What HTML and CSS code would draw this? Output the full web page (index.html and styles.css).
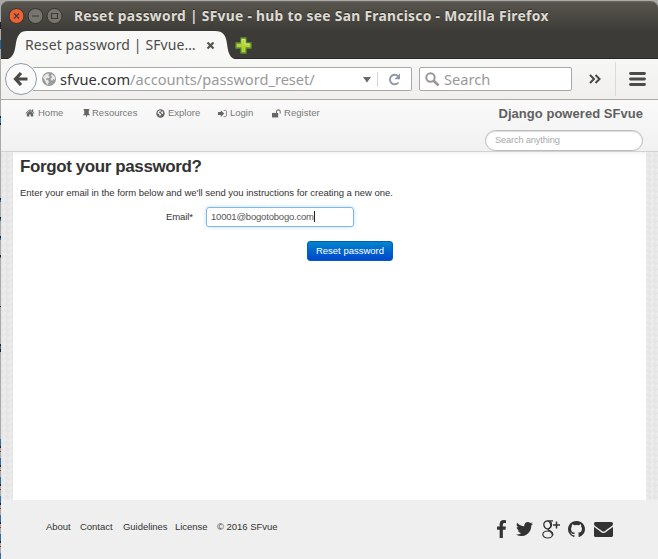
FILE: index.html
```html
<!DOCTYPE html>
<html lang="en">
<head>
<meta charset="utf-8">
<title>Reset password | SFvue - hub to see San Francisco</title>
<link rel="stylesheet" href="styles.css">
</head>
<body>
<div class="window">
  <div class="chrome">
    <div class="titlebar">
      <svg class="controls" width="55" height="18" viewBox="0 0 55 18">
        <g stroke="#34332f"><circle cx="8.500" cy="8" r="7.500" fill="#ee6035"/><circle cx="27.500" cy="8" r="7.500" fill="#77756e"/><circle cx="46.500" cy="8" r="7.500" fill="#77756e"/></g>
        <g fill="none" stroke="#3d3b36" stroke-width="1.200"><path d="M6 5.500l5 5M11 5.500l-5 5M24 8h7"/><path d="M43.500 5.500h6v5h-6z"/></g>
      </svg>
      <span class="window-title">Reset password | SFvue - hub to see San Francisco - Mozilla Firefox</span>
    </div>
    <div class="tabs">
      <div class="tab">
        <svg class="tab-shape" width="238" height="29" viewBox="0 0 238 29"><path d="M0 29C10 29 13 25 14.500 15C16 4 19 0 26 0H214C222 0 225 4 226 13C227.500 25 230 28 238 29Z" fill="#f8f8f7"/></svg>
        <span class="tab-label">Reset password | SFvue…</span>
        <svg class="tab-close" width="9" height="9" viewBox="0 0 9 9"><path d="M1.500 1.500l6 6M7.500 1.500l-6 6" stroke="#55544f" stroke-width="2.200"/></svg>
      </div>
      <svg class="tab-add" width="17" height="17" viewBox="0 0 17 17"><path d="M6 1h5v5h5v5h-5v5H6v-5H1V6h5z" fill="#b3d334" stroke="#5f932e" stroke-width="1.300"/><path d="M7 7V2.500h3V7h4.500" fill="none" stroke="#d9ec86"/></svg>
    </div>
  </div>
  <div class="toolbar">
    <div class="back"><svg width="16" height="16" viewBox="0 0 16 16"><path d="M8 2L2.500 8L8 14M3 8h11.500" fill="none" stroke="#4b4a49" stroke-width="3.200"/></svg></div>
    <div class="url">
      <svg class="site-globe" width="14" height="14" viewBox="0 0 14 14"><circle cx="7" cy="7" r="7" fill="#9b9b9b"/><path d="M1 5l3-3 3-.5-.5 2L8 5 6 6.500 4.500 6 4 7.500 6 8l1 2-1.500 3L3 9zM10 2l3 3v3l-1.500-1L10 9 8.500 7 10 5 9 3.500z" fill="#e8e8e8"/></svg>
      <span class="address"><b>sfvue.com</b>/accounts/password_reset/</span>
      <svg class="url-arrow" width="8" height="6" viewBox="0 0 8 6"><path d="M0 0h8L4 5.500z" fill="#686866"/></svg>
      <svg class="reload" width="13" height="13" viewBox="0 0 13 13"><path d="M10.500 9.500A4.800 4.800 0 1 1 10 3" fill="none" stroke="#8b98a6" stroke-width="1.900"/><path d="M12 .5v5.700H6.500z" fill="#8b98a6"/></svg>
    </div>
    <div class="search">
      <svg width="15" height="15" viewBox="0 0 15 15"><circle cx="5.500" cy="5.500" r="4.200" fill="none" stroke="#989898" stroke-width="2"/><path d="M8.500 8.500l5 5" stroke="#989898" stroke-width="2.700"/></svg>
      <span>Search</span>
    </div>
    <svg class="more" width="12" height="10" viewBox="0 0 12 10"><path d="M1 1l4 4-4 4M6.500 1l4 4-4 4" fill="none" stroke="#484848" stroke-width="2"/></svg>
    <div class="menu"><svg width="17" height="14" viewBox="0 0 17 14"><path d="M1.500 1.500h14M1.500 7h14M1.500 12.500h14" stroke="#4b4b4b" stroke-width="2.800" stroke-linecap="round"/></svg></div>
  </div>
  <div class="header">
    <nav class="nav">
      <a class="home"><svg viewBox="0 0 1792 1792"><path d="M1472 992v480q0 26-19 45t-45 19h-384v-384h-256v384h-384q-26 0-45-19t-19-45v-480q0-1 .5-3t.5-3l575-474 575 474q1 2 1 6zm223-69l-62 74q-8 9-21 11h-3q-13 0-21-7l-692-577-692 577q-12 8-24 7-13-2-21-11l-62-74q-8-10-7-23.500t11-21.500l719-599q32-26 76-26t76 26l244 204v-195q0-14 9-23t23-9h192q14 0 23 9t9 23v408l219 182q10 8 11 21.500t-7 23.500z"/></svg><span>Home</span></a>
      <a class="resources"><svg viewBox="0 0 16 16"><path d="M3 0h10v2.500h-1V8l2.500 3H9l-1 5-1-5H1.500L4 8V2.500H3z"/></svg><span>Resources</span></a>
      <a class="explore"><svg viewBox="0 0 16 16"><circle cx="8" cy="8" r="7.500"/><path d="M3 5l4-3 2 1-1 2H6L5 7l3 1 1 2-2 3-2-4-2-1zM11 3l2 4-1 2-2-1-1-2z" fill="#f6f6f6"/></svg><span>Explore</span></a>
      <a class="login"><svg viewBox="0 0 16 16"><path d="M0 5.500h5V2l6 6-6 6v-3.500H0z"/><path d="M10 2.500h3q2 0 2 2v7q0 2-2 2h-3" fill="none" stroke="currentColor" stroke-width="1.500"/></svg><span>Login</span></a>
      <a class="register"><svg viewBox="0 0 16 16"><path d="M0 7h11v8H0z"/><path d="M8 8V5q0-3.500 3.300-3.500T14.700 5v3" fill="none" stroke="currentColor" stroke-width="1.900"/></svg><span>Register</span></a>
    </nav>
    <div class="brand-area">
      <div class="brand"><span>Django powered SFvue</span></div>
      <div class="site-search"><span>Search anything</span></div>
    </div>
  </div>
  <div class="content">
    <main class="page">
      <h1><span>Forgot your password?</span></h1>
      <p><span>Enter your email in the form below and we'll send you instructions for creating a new one.</span></p>
      <div class="field"><label>Email*</label><div class="input"><span>10001@bogotobogo.com</span><i class="caret"></i></div></div>
      <div class="button"><span>Reset password</span></div>
    </main>
  </div>
  <footer class="footer">
    <div class="links"><a>About</a><a>Contact</a><a>Guidelines</a><a>License</a><a>© 2016 SFvue</a></div>
    <div class="social">
      <svg class="fb" width="9" height="18" viewBox="479 0 864 1664" preserveAspectRatio="none"><path d="M1343 12v264h-157q-86 0-116 36t-30 108v189h293l-39 296h-254v759h-306v-759h-255v-296h255v-218q0-186 104-288.500t277-102.500q147 0 228 12z"/></svg>
      <svg class="tw" width="17" height="14" viewBox="108 256 1576 1280" preserveAspectRatio="none"><path d="M1684 408q-67 98-162 167 1 14 1 42 0 130-38 259.500t-115.500 248.500-184.500 210.500-258 146-323 54.500q-271 0-496-145 35 4 78 4 225 0 401-138-105-2-188-64.500t-114-159.500q33 5 61 5 43 0 85-11-112-23-185.500-111.500t-73.500-205.500v-4q68 38 146 41-66-44-105-115t-39-154q0-88 44-163 121 149 294.500 238.500t371.500 99.500q-8-38-8-74 0-134 94.500-228.500t228.500-94.500q140 0 236 102 109-21 205-78-37 115-142 178 93-10 186-50z"/></svg>
      <svg class="gp" width="19" height="19" viewBox="0 0 19 19"><g fill="none" stroke="#333"><ellipse cx="5.300" cy="4.900" rx="3.400" ry="4" stroke-width="1.300" transform="rotate(-15 5.300 4.900)"/><path d="M11 .8H5.500M8.300 1.500C10.300 3.500 9.800 6.500 8 7.800S5.500 9.500 7 10.600" stroke-width="1.200"/><ellipse cx="5.700" cy="14.500" rx="4.900" ry="3.500" stroke-width="1.200"/><path d="M6.500 10.300q4.500 2 4 5" stroke-width="1.600"/><path d="M14.500 1.500v7M11 5h7" stroke-width="1.500"/></g></svg>
      <svg class="gh" width="17" height="16" viewBox="128 128 1536 1500" preserveAspectRatio="none"><path d="M896 128q209 0 385.500 103t279.500 279.500 103 385.500q0 251-146.500 451.500t-378.500 277.500q-27 5-40-7t-13-30q0-3 .5-76.500t.5-134.500q0-97-52-142 57-6 102.500-18t94-39 81-66.500 53-105 20.500-150.500q0-119-79-206 37-91-8-204-28-9-81 11t-92 44l-38 24q-93-26-192-26t-192 26q-16-11-42.500-27t-83.500-38.500-85-13.500q-45 113-8 204-79 87-79 206 0 85 20.500 150t52.500 105 80.500 67 94 39 102.500 18q-39 36-49 103-21 10-45 15t-57 5-65.500-21.500-55.500-62.500q-19-32-48.500-52t-49.500-24l-20-3q-21 0-29 4.500t-5 11.500 9 14 13 12l7 5q22 10 43.500 38t31.500 51l10 23q13 38 44 61.500t67 30 69.500 7 55.500-3.500l23-4q0 38 .5 88.500t.5 54.500q0 18-13 30t-40 7q-232-77-378.500-277.500t-146.500-451.500q0-209 103-385.500t279.500-279.500 385.500-103z"/></svg>
      <svg class="mail" width="19" height="15" viewBox="0 256 1792 1408" preserveAspectRatio="none"><path d="M1792 710v794q0 66-47 113t-113 47h-1472q-66 0-113-47t-47-113v-794q44 49 101 87 362 246 497 345 57 42 92.500 65.500t94.500 48 110 24.500h2q51 0 110-24.500t94.500-48 92.500-65.500q170-123 498-345 57-39 100-87zm0-294q0 79-49 151t-122 123q-376 261-468 325-10 7-42.500 31t-54 38.500-52 32.500-57.500 27-50 9h-2q-23 0-50-9t-57.500-27-52-32.500-54-38.500-42.500-31q-91-64-262-182.500t-205-142.500q-62-42-117-115.500t-55-136.500q0-78 41.500-130t118.500-52h1472q65 0 112.500 47t47.500 113z"/></svg>
    </div>
  </footer>
</div>
</body>
</html>
```
FILE: styles.css
```css
* { box-sizing: border-box; }
body {
  margin: 0;
  width: 658px;
  height: 559px;
  overflow: hidden;
  padding: 1px 0 0 1px;
  background:
    repeating-linear-gradient(#2a6fa5 0 7px, #222 7px 9px, #a9a9a9 9px 12px, #b22 12px 13px, #a9a9a9 13px 19px) 0 439px / 1px 120px no-repeat,
    linear-gradient(#222 0 2px, #2a6fa5 2px 5px, #222 5px 7px) 0 344px / 1px 8px no-repeat,
    linear-gradient(#222, #222) 0 306px / 1px 1px no-repeat,
    repeating-linear-gradient(#222 0 2px, #2a6fa5 2px 4px, #a9a9a9 4px 19px) 0 198px / 1px 60px no-repeat,
    linear-gradient(#222 0 2px, #2a8ab5 2px 7px, #222 7px) 0 116px / 1px 9px no-repeat,
    linear-gradient(#222 0 7px, #a9a9a9 7px 18px, #1768a8 18px) 0 22px / 1px 27px no-repeat,
    #a9a9a9;
  font-family: "Liberation Sans", Arial, sans-serif;
  font-size: 9.500px;
  color: #333;
}
svg { display: block; flex: none; }
span, a, label { white-space: nowrap; }
.window { display: flex; flex-direction: column; height: 558px; }
.chrome {
  height: 58px;
  border-radius: 7px 7px 0 0;
  border-top: 1px solid #68665e;
  border-bottom: 1px solid #292825;
  background: linear-gradient(#58564e, #3c3b37 29px);
  font-family: "Noto Sans", sans-serif;
}
.titlebar { height: 29px; display: flex; align-items: center; padding-left: 7px; }
.window-title { margin-left: 11px; font-size: 13.800px; font-weight: 700; color: #dfdbd2; line-height: 20px; padding-bottom: 1px; letter-spacing: .3px; text-shadow: 0 -1px #2d2c29; }
.tabs { height: 28px; display: flex; align-items: flex-start; }
.tab { position: relative; width: 238px; height: 28px; display: flex; align-items: center; padding-left: 24px; }
.tab-shape { position: absolute; left: 0; top: 0; }
.tab-label { position: relative; width: 175px; font-size: 14px; letter-spacing: .12px; color: #4c4c4c; padding-bottom: 1px; }
.tab-close { position: relative; margin-left: 6px; }
.tab-add { margin: 6px 0 0 -4px; }
.toolbar {
  height: 41px;
  display: flex;
  align-items: center;
  background: linear-gradient(#f7f7f6, #f0efee);
  border-bottom: 1px solid #aaa9a3;
  font-family: "Noto Sans", sans-serif;
  font-size: 14.600px;
}
.back { position: relative; z-index: 1; width: 32px; height: 32px; margin-left: 4px; border: 1px solid #8f9bab; border-radius: 50%; background: #fafafa; display: flex; align-items: center; justify-content: center; }
.url { width: 379px; height: 24px; margin-left: -4px; padding-left: 9px; display: flex; align-items: center; border: 1px solid #aaa9a4; border-left: 0; border-radius: 0 2px 2px 0; background: #fff; }
.address { width: 303px; margin-left: 4px; color: #999; }
.address b { color: #333; font-weight: 400; }
.url-arrow { margin: 2px 0 0 0; }
.reload { box-sizing: content-box; margin-left: 6px; padding: 1px 0 1px 10px; border-left: 1px solid #d5d5d5; }
.search { width: 153px; height: 24px; margin-left: 7px; padding-left: 5px; display: flex; align-items: center; gap: 4px; border: 1px solid #aaa9a4; border-radius: 2px; background: #fff; color: #999; }
.more { margin-left: 17px; }
.menu { height: 34px; margin-left: 14px; padding-left: 13px; border-left: 1px solid #dadada; display: flex; align-items: center; }
.header { height: 52px; display: flex; justify-content: space-between; background: linear-gradient(#fafafa, #f1f1f1); border-bottom: 1px solid #d2d2d2; color: #777; }
.nav { display: flex; height: 26px; padding-left: 25px; }
.nav a { display: flex; align-items: center; gap: 3px; height: 26px; line-height: 26px; }
.nav svg { width: 9px; height: 9px; fill: #666; }
.nav .home svg { width: 10px; height: 10px; margin: 0 -1px 0 -1px; }
.nav .home span { margin-left: 1px; }
.home { width: 56px; }
.resources { width: 74px; }
.resources svg { margin-right: -2px; }
.explore { width: 62px; }
.login { width: 54px; }
.register { letter-spacing: .05px; }
.brand-area { width: 158px; margin-right: 15px; }
.brand { height: 30px; display: flex; justify-content: flex-end; align-items: center; font-size: 13px; letter-spacing: .04px; font-weight: 700; color: #606060; padding-bottom: 3px; }
.site-search { height: 21px; padding-left: 9px; line-height: 19px; border: 1px solid #bbb; border-radius: 11px; background: #fff; color: #aaa; box-shadow: inset 0 1px 1px #ddd; font-size: 9.300px; letter-spacing: -.17px; }
.content { height: 348px; padding: 0 12px; background: repeating-conic-gradient(from 45deg, #e5e5e5 0 25%, #ebebeb 0 50%) 0 0 / 6px 6px; }
.page { height: 348px; padding: 4px 7px; background: linear-gradient(#f4f4f4, #fff 4px); }
h1 { margin: 0; height: 22px; font-size: 17px; line-height: 22px; letter-spacing: -.4px; }
p { margin: 10px 0 0; height: 10px; line-height: 10px; letter-spacing: -.02px; }
.field { display: flex; align-items: center; height: 20px; margin-top: 9px; padding-left: 146px; }
.field label { width: 40px; padding-bottom: 1px; letter-spacing: -.1px; }
.input { width: 148px; height: 20px; padding: 0 0 1px 4px; display: flex; align-items: center; border: 1px solid #82b7df; border-radius: 3px; box-shadow: 0 0 4px #b9dcf6; color: #555; letter-spacing: -.2px; }
.caret { width: 1px; height: 11px; background: #222; }
.button { display: flex; align-items: center; justify-content: center; width: 86px; height: 20px; margin: 14px 0 0 287px; padding-bottom: 1px; border: 1px solid #0060b8; border-radius: 3px; background: linear-gradient(#0084cc, #0046cc); color: #fff; }
.footer { height: 59px; display: flex; background: #efefef; padding-left: 45px; }
.links { display: flex; width: 451px; height: 53px; align-items: center; letter-spacing: -.03px; }
.links a:nth-child(1) { width: 34px; }
.links a:nth-child(2) { width: 43px; }
.links a:nth-child(3) { width: 52px; }
.links a:nth-child(4) { width: 42px; }
.social { display: flex; align-items: flex-start; padding-top: 20px; fill: #333; }
.tw { margin: 2px 0 0 10px; }
.gp { margin-left: 9px; }
.gh { margin: 1px 0 0 7px; }
.mail { margin: 2px 0 0 9px; }
```
